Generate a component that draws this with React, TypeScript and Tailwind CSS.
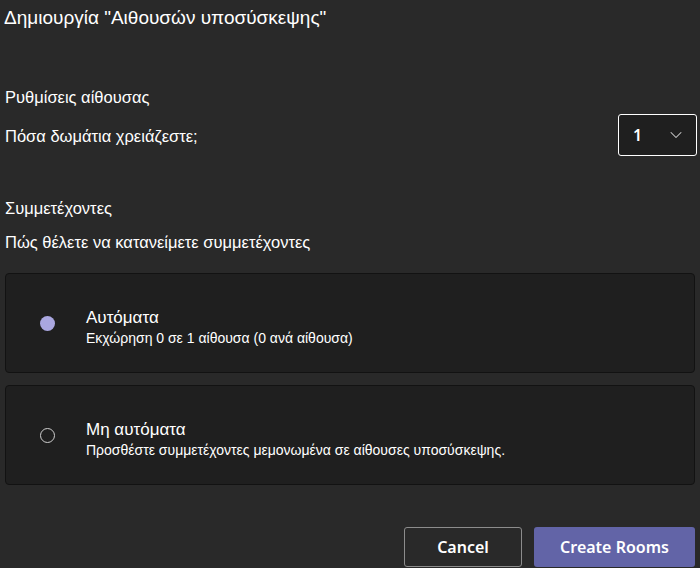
import { ChevronDown } from 'lucide-react';

type Option = {
    title: string;
    description: string;
    selected: boolean;
};

const options: Option[] = [
    { title: 'Αυτόματα', description: 'Εκχώρηση 0 σε 1 αίθουσα (0 ανά αίθουσα)', selected: true },
    { title: 'Μη αυτόματα', description: 'Προσθέστε συμμετέχοντες μεμονωμένα σε αίθουσες υποσύσκεψης.', selected: false },
];

function RadioCard({ option }: { option: Option }) {
    return (
        <div className="flex h-[100px] items-center rounded-[4px] border border-[#121212] bg-[#1f1f1f] pl-[34px]">
            {option.selected ? (
                <span className="h-[15px] w-[15px] rounded-full bg-[#aaa7e0]" />
            ) : (
                <span className="h-[15px] w-[15px] rounded-full border-[1.5px] border-[#cfcfcf]" />
            )}
            <div className="ml-[31px] flex flex-col pt-[10px]">
                <span className="text-[17px] leading-[20px] text-white">{option.title}</span>
                <span className="text-[14px] leading-[20px] text-white">{option.description}</span>
            </div>
        </div>
    );
}

export default function App() {
    return (
        <div className="flex h-[568px] w-[700px] flex-col bg-[#292929] px-[5px] font-['Liberation_Sans',Arial,sans-serif] text-white">
            <h1 className="-ml-px pt-[6px] text-[19px] leading-6">Δημιουργία "Αιθουσών υποσύσκεψης"</h1>

            <p className="mt-[56px] text-[16.5px] leading-[22px]">Ρυθμίσεις αίθουσας</p>
            <div className="mt-[6px] flex items-center justify-between">
                <span className="pt-[2px] text-[16.5px] leading-[22px]">Πόσα δωμάτια χρειάζεστε;</span>
                <button className="mr-[-2px] flex h-[42px] w-[79px] items-center justify-between rounded-[3px] border-[1.5px] border-white bg-[#1f1f1f] pl-[14px] pr-[10px] font-['Noto_Sans',sans-serif] text-[16px] font-semibold">
                    1
                    <ChevronDown size={20} strokeWidth={1.25} className="text-[#cfcfcf]" />
                </button>
            </div>

            <p className="mt-[41px] text-[16.5px] leading-[22px]">Συμμετέχοντες</p>
            <p className="mt-[12px] text-[16.5px] leading-[22px]">Πώς θέλετε να κατανείμετε συμμετέχοντες</p>

            <div className="mt-[20px] flex flex-col gap-[12px]">
                {options.map((option) => (
                    <RadioCard key={option.title} option={option} />
                ))}
            </div>

            <div className="mt-[42px] flex justify-end gap-[12px] font-['Noto_Sans',sans-serif] text-[16px] font-semibold">
                <button className="h-[40px] w-[118px] rounded-[3px] border border-[#8c8c8c] bg-transparent">Cancel</button>
                <button className="h-[40px] w-[161px] rounded-[3px] bg-[#6264a7]">Create Rooms</button>
            </div>
        </div>
    );
}
